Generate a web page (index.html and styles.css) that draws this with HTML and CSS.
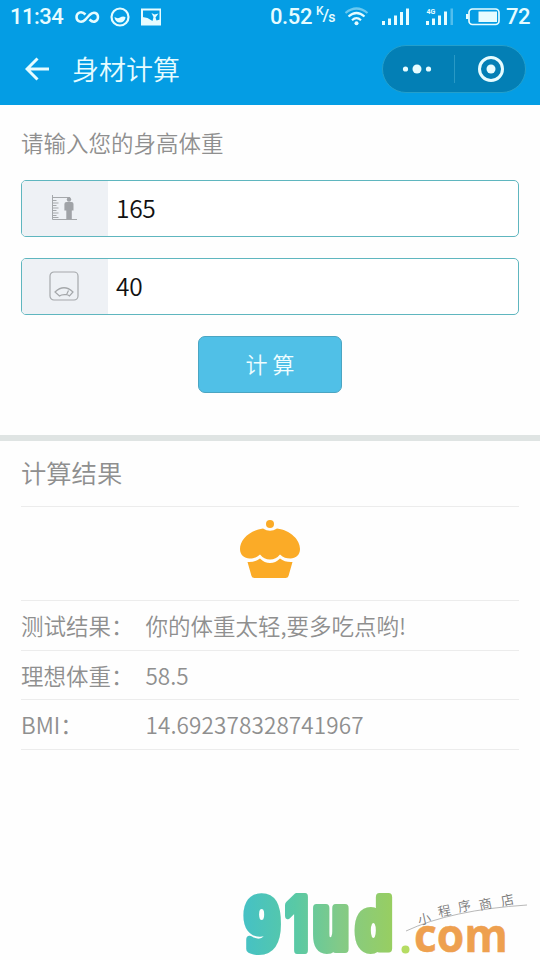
FILE: index.html
```html
<!DOCTYPE html>
<html lang="zh-CN">
<head>
<meta charset="utf-8">
<title>身材计算</title>
<link rel="stylesheet" href="styles.css">
</head>
<body>
<header class="top">
  <div class="status">
    <span class="clock">11:34</span>
    <svg class="status-left" width="86" height="24" viewBox="0 0 86 24" fill="none" stroke="currentColor" stroke-width="2.500">
      <path d="M10.500 9.500C6 5 1.500 8 1.500 12s4.500 7 9 2.500l4-4.500c4.500-4.500 8.500-1.500 8.500 2s-4 7-8.500 2.500"/>
      <circle cx="45" cy="12" r="8.500" stroke-width="2.200"/>
      <path d="M39.500 12q3 2 5.500 .5t5.500-.5a5.500 5.500 0 0 1-11 0z" fill="currentColor" stroke="none"/>
      <path d="M67.500 4.500H86v15H67.500z" stroke-width="2" transform="translate(-.5 0)"/>
      <path d="m67.500 12 5 1 5 3 1-4-2-4 3 1.500 4-1-3 4 1 3 3.500-1V20h-18z" fill="currentColor" stroke="none"/>
    </svg>
    <span class="speed">0.52</span>
    <span class="unit"><span class="unit-k">K</span><span class="unit-slash">/</span><span class="unit-s">s</span></span>
    <svg class="status-right" width="157" height="24" viewBox="345 5 157 24" fill="currentColor">
      <g fill="none" stroke="currentColor" stroke-width="2.200">
        <path d="M345.500 13q11-9 22 0" opacity=".45"/>
        <path d="M348.500 16.500q8-7 16 0"/>
        <path d="M352 20.200q4.500-4 9 0"/>
      </g>
      <circle cx="356.500" cy="23.200" r="2"/>
      <path d="M382 21h3v4h-3zM388 18.500h3V25h-3zM394 15.500h3V25h-3zM400 12h3v13h-3zM406 8.500h3V25h-3z"/>
      <path d="M426 21h3v4h-3zM432 18.500h3V25h-3zM438 15.500h3V25h-3zM444 11.500h3V25h-3z"/>
      <path d="M450.500 8.500h2.500V25h-2.500z" opacity=".35"/>
      <text x="426.500" y="14" class="net">4G</text>
      <rect x="469" y="9" width="30" height="15.500" rx="3.500" fill="none" stroke="currentColor" stroke-width="1.700"/>
      <path d="M478.500 11.500H497V22h-18.500zM466 14h2.500v5H466z"/>
    </svg>
    <span class="percent">72</span>
  </div>
  <nav class="nav">
    <svg class="back" width="24" height="24" viewBox="0 0 24 24" fill="none" stroke="currentColor" stroke-width="3"><path d="M24 12H2M12.500 1.500 2 12l10.500 10.500"/></svg>
    <h1 class="title">身材计算</h1>
    <div class="capsule">
      <svg class="dots" width="30" height="10" viewBox="0 0 30 10" fill="currentColor"><circle cx="3.500" cy="5" r="2.600"/><circle cx="15" cy="5" r="4.500"/><circle cx="26.500" cy="5" r="2.600"/></svg>
      <span class="split"></span>
      <svg class="target" width="26" height="26" viewBox="0 0 26 26"><circle cx="13" cy="13" r="11.500" fill="none" stroke="currentColor" stroke-width="3"/><circle cx="13" cy="13" r="4.500" fill="currentColor"/></svg>
    </div>
  </nav>
</header>

<main>
  <section class="form">
    <p class="prompt">请输入您的身高体重</p>
    <div class="field">
      <span class="field-icon">
        <svg width="26" height="26" viewBox="0 0 26 26" fill="none" stroke="#a5a8ab" stroke-width="1">
          <path d="M1.500 0v24.500H26M1.500 2.500H19M1.500 5.500h4M1.500 8h6M1.500 10.500h4M1.500 13h6M1.500 15.500h4M1.500 18h6M1.500 20.500h4M1.500 22.500h6"/>
          <path d="M15.500 7h5q2 0 2 2v6.500h-1.700V24h-5.500v-8.500h-1.900V9q0-2 2.100-2z" fill="#a0a3a7" stroke="none"/>
          <circle cx="18" cy="4.500" r="2.200" fill="#a0a3a7" stroke="none"/>
        </svg>
      </span>
      <span class="value">165</span>
    </div>
    <div class="field">
      <span class="field-icon">
        <svg width="30" height="30" viewBox="0 0 30 30" fill="none" stroke="#a5a8ab" stroke-width="1.200">
          <rect x="1" y="1" width="28" height="28" rx="4"/>
          <path d="M6 21q9-8.500 18 0l-3.500 4q-1.500-1.200-3-1.300-3-.4-5 .3l-2 1zM17.500 23.700l2-4.200"/>
        </svg>
      </span>
      <span class="value">40</span>
    </div>
    <button class="submit" type="button">计 算</button>
  </section>

  <section class="result">
    <h2 class="heading">计算结果</h2>
    <div class="picture">
      <svg width="60" height="60" viewBox="0 0 60 60" fill="#fbab27">
        <circle cx="30" cy="4" r="4"/>
        <path d="M23 8.500q7 4.500 14 0C51 10.500 60 20 60 29c0 6-4.500 9.500-9.500 9.500-4.500 0-7-1-10.500-4q-4 5-10 5t-10-5c-3.500 3-6 4-10.500 4C4.500 38.500 0 35 0 29 0 20 9 10.500 23 8.500z"/>
        <path d="M7.500 42q7.500 .5 12.500-3.500Q24.500 43 30 43t10-4.500q5 4 12.500 3.500l-4 14q-.5 2-3 2h-31q-2.500 0-3-2z"/>
      </svg>
    </div>
    <dl class="rows">
      <div class="row"><dt>测试结果：</dt><dd>你的体重太轻,要多吃点哟!</dd></div>
      <div class="row"><dt>理想体重：</dt><dd>58.5</dd></div>
      <div class="row"><dt>BMI：</dt><dd class="bmi">14.692378328741967</dd></div>
    </dl>
  </section>
</main>

<footer class="brand">
  <svg width="300" height="80" viewBox="240 880 300 80">
    <defs>
      <linearGradient id="tint" gradientUnits="userSpaceOnUse" x1="243" y1="0" x2="393" y2="0">
        <stop offset="0" stop-color="#45c1c5"/><stop offset=".35" stop-color="#59c9a5"/><stop offset=".65" stop-color="#83ca87"/><stop offset="1" stop-color="#98ce61"/>
      </linearGradient>
      <mask id="letters" maskUnits="userSpaceOnUse" x="240" y="880" width="160" height="80">
        <g class="logo">
          <text x="243.500" y="949.500" textLength="38" lengthAdjust="spacingAndGlyphs" font-size="72">9</text>
          <text class="one" x="285.500" y="950" textLength="23" lengthAdjust="spacingAndGlyphs" font-size="73">1</text>
          <text x="311.500" y="949" textLength="39" lengthAdjust="spacingAndGlyphs" font-size="74">u</text>
          <text x="355.500" y="949" textLength="37.500" lengthAdjust="spacingAndGlyphs" font-size="68">d</text>
        </g>
      </mask>
    </defs>
    <rect x="240" y="880" width="160" height="80" fill="url(#tint)" mask="url(#letters)"/>
    <circle cx="405.500" cy="949.500" r="4" fill="#b5dc62"/>
    <text class="com" x="414" y="952" textLength="94" lengthAdjust="spacingAndGlyphs">com</text>
    <path d="M406 931q45-21 121-26" fill="none" stroke="#999" stroke-width=".7"/>
    <text class="shop" x="419 439 459 480 502" y="925 917 912 910 906" rotate="-12">小程序商店</text>
  </svg>
</footer>
</body>
</html>
```
FILE: styles.css
```css
* { box-sizing: border-box; }
body {
  margin: 0;
  height: 960px;
  overflow: hidden;
  display: flex;
  flex-direction: column;
  background: #fefefe;
  color: #8f8f8f;
  font-family: "Noto Sans CJK SC", sans-serif;
  font-weight: 350;
}
h1, h2, p, dl, dd { margin: 0; font-weight: inherit; }
svg { display: block; flex: none; }

.top { height: 105px; background: #049de4; color: #e6fcff; }
.status {
  height: 34px;
  padding: 0 0 0 10px;
  display: flex;
  align-items: center;
  font: 500 22px/34px Roboto, sans-serif;
}
.clock { width: 65px; letter-spacing: -.5px; }
.status-left { width: 86px; }
.speed { width: 46px; margin-left: 109px; letter-spacing: -.4px; }
.unit { width: 29px; display: flex; line-height: 20px; }
.unit-k { font-size: 12px; line-height: 12px; }
.unit-slash { font-size: 17px; margin-left: -1px; }
.unit-s { font-size: 14px; line-height: 24px; margin-left: -1px; }
.status-right { margin-right: 4px; }
.percent { letter-spacing: -.4px; }
.net { font: 700 7px Roboto, sans-serif; }

.nav { height: 70px; padding: 0 14px 0 25px; display: flex; align-items: center; }
.title { margin-left: 23px; font-size: 27px; line-height: 40px; }
.capsule {
  margin-left: auto;
  width: 144px;
  height: 48px;
  padding: 0 20px 0 19px;
  display: flex;
  align-items: center;
  border: 1px solid #249fcb;
  border-radius: 24px;
  background: #037fb5;
}
.split { width: 1px; height: 28px; margin: 0 23px 0 22px; background: #2999c5; }

.form { height: 330px; padding: 17px 21px 0; display: flex; flex-direction: column; }
.prompt { height: 58px; font-size: 22.500px; line-height: 40px; }
.field {
  height: 57px;
  margin-bottom: 21px;
  flex: none;
  display: flex;
  overflow: hidden;
  border: 1.500px solid #5fb6bf;
  border-radius: 5px;
  background: #fff;
}
.field-icon { width: 86px; padding: 0 3px 1px 0; display: flex; align-items: center; justify-content: center; background: #eef1f5; }
.value { margin-left: 8px; color: #111; font-size: 24.500px; line-height: 54px; letter-spacing: -.3px; }
.submit {
  width: 144px;
  height: 57px;
  align-self: center;
  padding: 0 0 4px;
  border: 1px solid #4ba5c2;
  border-radius: 7px;
  background: #50c0e7;
  color: #effdff;
  font: 350 22px/50px "Noto Sans CJK SC", sans-serif;
}

.result { border-top: 6px solid #dfe4e3; padding: 0 21px; }
.heading { height: 66px; border-bottom: 1px solid #ececec; font-size: 25.300px; line-height: 63px; }
.picture { height: 94px; padding-top: 13px; display: flex; justify-content: center; border-bottom: 1px solid #ececec; }
.row { height: 49.600px; display: flex; border-bottom: 1px solid #ececec; font-size: 22.500px; line-height: 49px; }
dt { width: 124.500px; white-space: nowrap; }
.bmi { letter-spacing: .12px; }

.brand { margin-top: auto; display: flex; justify-content: flex-end; }
.logo { font-family: "DejaVu Sans Mono", monospace; font-weight: 700; fill: #fff; stroke: #fff; stroke-width: 8px; stroke-linejoin: round; }
.one { font-family: Inter, sans-serif; }
.com { font: 700 46px "Open Sans", sans-serif; fill: #eea04f; stroke: #eea04f; stroke-width: .5px; }
.shop { font-size: 13px; fill: #777; }
```
